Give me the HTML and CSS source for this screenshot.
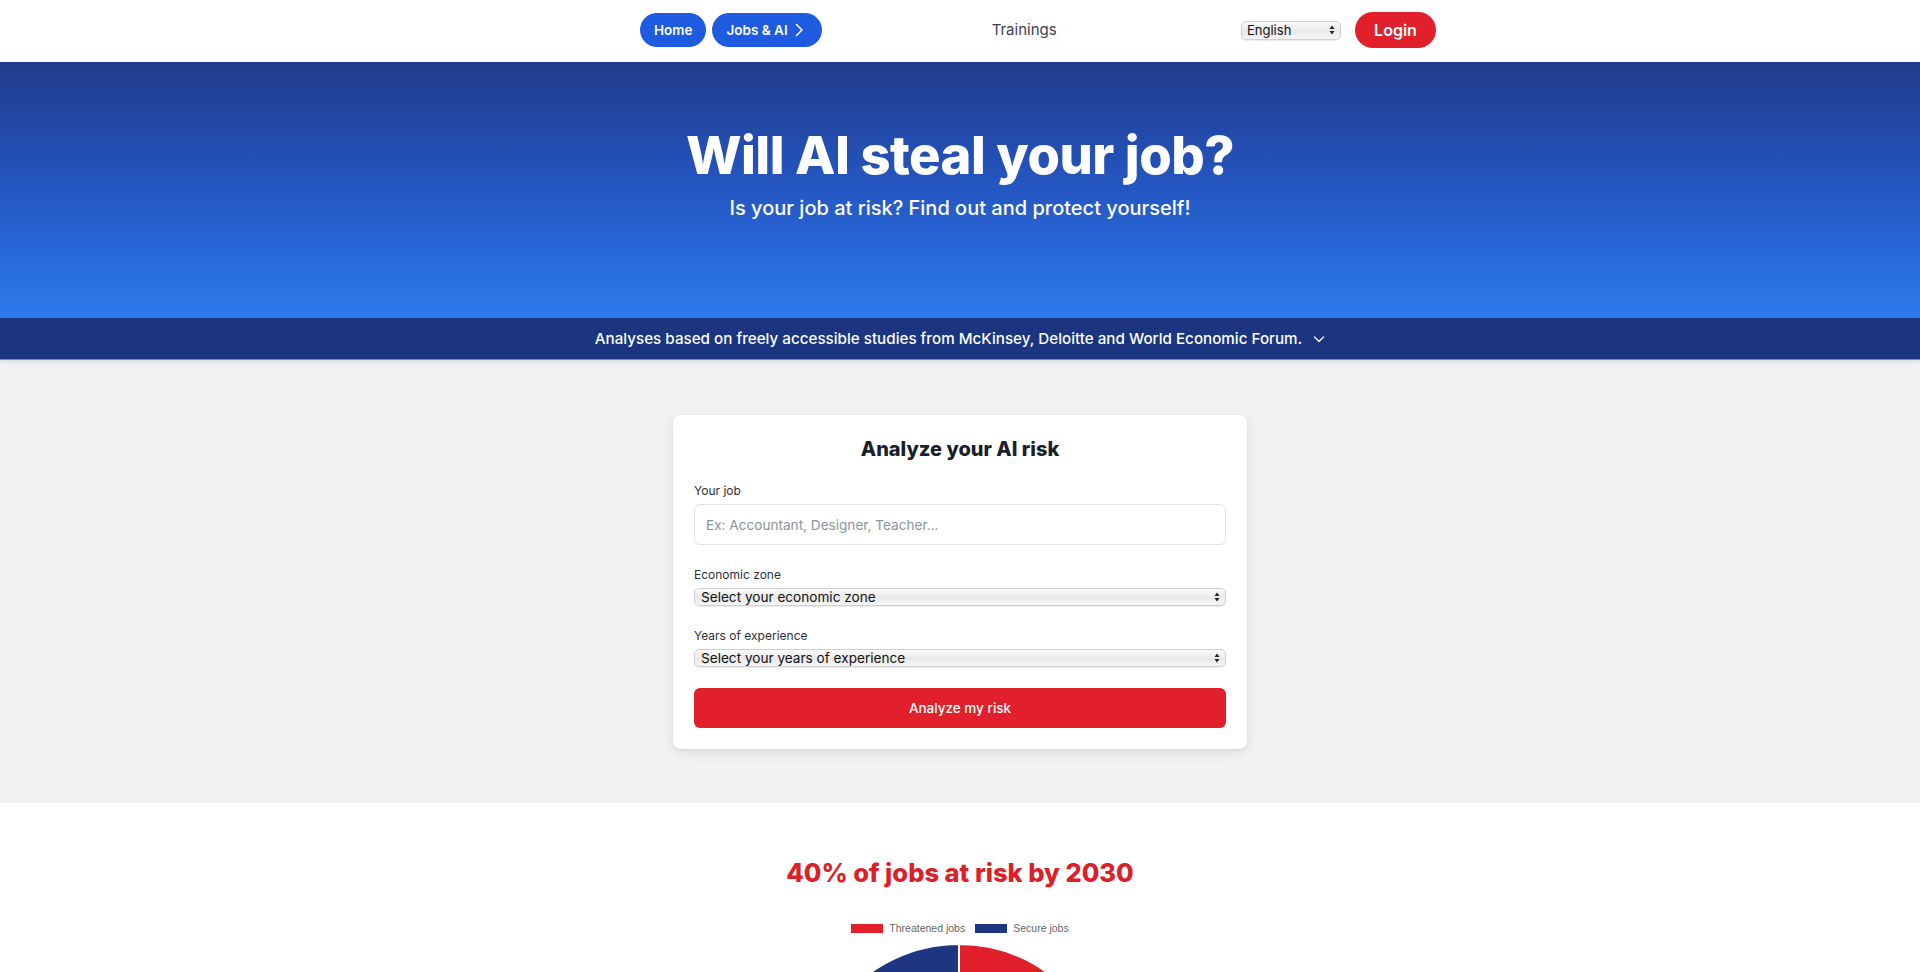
FILE: index.html
```html
<!DOCTYPE html>
<html lang="en">
<head>
<meta charset="utf-8">
<title>Will AI steal your job?</title>
<link rel="stylesheet" href="styles.css">
</head>
<body>
<header class="nav">
  <div class="nav-inner">
    <div class="nav-left">
      <a class="pill" href="#">Home</a>
      <a class="pill pill-icon" href="#">Jobs &amp; AI
        <svg width="16" height="16" viewBox="0 0 16 16"><path d="M5.5 2.5 L11 8 L5.5 13.5" fill="none" stroke="#fff" stroke-width="1.5" stroke-linecap="round" stroke-linejoin="round"/></svg>
      </a>
    </div>
    <a class="nav-link" href="#">Trainings</a>
    <div class="nav-right">
      <div class="lang-wrap">
        <select class="lang"><option>English</option><option>Français</option></select>
        <svg class="updown" width="6" height="10" viewBox="0 0 6 10"><path d="M3 0.5 L5.5 4 L0.5 4 Z M3 9.5 L5.5 6 L0.5 6 Z" fill="#222"/></svg>
      </div>
      <a class="login" href="#">Login</a>
    </div>
  </div>
</header>

<section class="hero">
  <h1 class="hero-title">Will AI steal your job?</h1>
  <p class="hero-sub">Is your job at risk? Find out and protect yourself!</p>
</section>

<div class="sources">
  <span>Analyses based on freely accessible studies from McKinsey, Deloitte and World Economic Forum.</span>
  <svg width="12" height="12" viewBox="0 0 12 12"><path d="M1.5 4 L6 8.5 L10.5 4" fill="none" stroke="#fff" stroke-width="1.3" stroke-linecap="round" stroke-linejoin="round"/></svg>
</div>

<main class="analyze">
  <form class="card">
    <h2 class="card-title">Analyze your AI risk</h2>
    <div class="field">
      <label class="label">Your job</label>
      <input class="input" type="text" placeholder="Ex: Accountant, Designer, Teacher...">
    </div>
    <div class="field">
      <label class="label">Economic zone</label>
      <div class="sel-wrap">
        <select class="sel"><option>Select your economic zone</option></select>
        <svg class="updown" width="6" height="10" viewBox="0 0 6 10"><path d="M3 0.5 L5.5 4 L0.5 4 Z M3 9.5 L5.5 6 L0.5 6 Z" fill="#222"/></svg>
      </div>
    </div>
    <div class="field">
      <label class="label">Years of experience</label>
      <div class="sel-wrap">
        <select class="sel"><option>Select your years of experience</option></select>
        <svg class="updown" width="6" height="10" viewBox="0 0 6 10"><path d="M3 0.5 L5.5 4 L0.5 4 Z M3 9.5 L5.5 6 L0.5 6 Z" fill="#222"/></svg>
      </div>
    </div>
    <button class="submit" type="button">Analyze my risk</button>
  </form>
</main>

<section class="stats">
  <h2 class="stats-title">40% of jobs at risk by 2030</h2>
  <div class="legend">
    <span class="legend-item"><i class="swatch swatch-red"></i>Threatened jobs</span>
    <span class="legend-item"><i class="swatch swatch-blue"></i>Secure jobs</span>
  </div>
  <svg class="pie" width="304" height="304" viewBox="0 0 304 304">
    <path d="M152 152 L152 1 A151 151 0 0 1 240.76 274.16 Z" fill="#e1202b" stroke="#fff" stroke-width="2"/>
    <path d="M152 152 L240.76 274.16 A151 151 0 1 1 152 1 Z" fill="#1e3580" stroke="#fff" stroke-width="2"/>
  </svg>
</section>
</body>
</html>
```

FILE: styles.css
```css
* { box-sizing: border-box; }
html, body { margin: 0; padding: 0; }
body {
  font-family: Inter, "Noto Sans", "Liberation Sans", sans-serif;
  color: #111827;
  background: #fff;
}
a { text-decoration: none; }

/* NAV */
.nav {
  height: 62px;
  padding-bottom: 2px;
  background: #fff;
  display: flex;
  align-items: center;
}
.nav-inner {
  width: 796px;
  margin-left: calc(50% - 320px);
  display: flex;
  align-items: center;
}
.nav-left { display: flex; gap: 6px; align-items: center; }
.pill {
  height: 34px;
  display: inline-flex;
  align-items: center;
  padding: 0 14px;
  border-radius: 17px;
  background: #1e5be0;
  color: #fff;
  font-size: 13.5px;
  font-weight: 600;
}
.pill-icon { padding: 0 15px 0 14px; gap: 3px; }
.nav-link {
  margin-left: 170px;
  font-size: 15px;
  color: #3b4150;
  margin-top: -2px;
}
.nav-right {
  margin-left: auto;
  display: flex;
  align-items: center;
  gap: 14px;
}
.lang-wrap, .sel-wrap { position: relative; }
.lang, .sel {
  display: block;
  appearance: none;
  -webkit-appearance: none;
  font-family: Inter, "Noto Sans", sans-serif;
  color: #111;
  border: 1px solid #cfcfcf;
  border-radius: 5px;
  background: linear-gradient(to bottom, #fafafa 0%, #e9e9e9 55%, #f6f6f6 100%);
  box-shadow: 0 1px 1px rgba(0,0,0,0.08);
  outline: none;
}
.lang {
  width: 100px;
  height: 19px;
  font-size: 13px;
  padding: 0 0 0 5px;
  line-height: 17px;
}
.updown {
  position: absolute;
  right: 6px;
  top: 50%;
  margin-top: -5px;
  pointer-events: none;
}
.login {
  height: 36px;
  width: 81px;
  display: inline-flex;
  align-items: center;
  justify-content: center;
  border-radius: 18px;
  background: #e1202b;
  color: #fff;
  font-size: 16px;
  font-weight: 600;
}

/* HERO */
.hero {
  height: 256px;
  background: linear-gradient(to bottom, #1f3b8a 0%, #2557c4 50%, #2d7aec 100%);
  text-align: center;
  color: #fff;
  padding-top: 66px;
}
.hero-title {
  margin: 0;
  font-size: 52.5px;
  line-height: 54px;
  font-weight: 800;
  letter-spacing: -0.5px;
}
.hero-sub {
  margin: 12px 0 0;
  font-size: 20px;
  line-height: 28px;
  font-weight: 500;
}

/* SOURCES BANNER */
.sources {
  height: 42px;
  background: #1b3580;
  color: #fff;
  display: flex;
  align-items: center;
  justify-content: center;
  gap: 11px;
  font-size: 15.2px;
  font-weight: 500;
  border-bottom: 1px solid #5b8fe4;
  box-shadow: 0 2px 4px rgba(0,0,0,0.10);
  position: relative;
}

/* ANALYZE */
.analyze {
  background: #f1f2f4;
  padding: 55px 0 54px;
  display: flex;
  justify-content: center;
}
.card {
  width: 574px;
  background: #fff;
  border-radius: 8px;
  box-shadow: 0 4px 14px rgba(0,0,0,0.09), 0 1px 3px rgba(0,0,0,0.05);
  padding: 21px 21px 21px;
  display: flex;
  flex-direction: column;
}
.card-title {
  margin: 0 0 19px;
  text-align: center;
  font-size: 20px;
  line-height: 26px;
  font-weight: 800;
  color: #1a1f2b;
}
.field { display: flex; flex-direction: column; margin-bottom: 20px; }
.label {
  font-size: 12px;
  line-height: 20px;
  color: #2b303b;
  margin-bottom: 3px;
}
.input {
  height: 41px;
  border: 1px solid #e1e3e7;
  border-radius: 6px;
  padding: 0 11px;
  font-family: Inter, "Noto Sans", sans-serif;
  font-size: 13.6px;
  color: #111;
  outline: none;
}
.input::placeholder { color: #8d939d; }
.sel {
  width: 100%;
  height: 18px;
  font-size: 13.6px;
  line-height: 16px;
  padding: 0 0 0 6px;
}
.submit {
  height: 40px;
  margin-top: 1px;
  border: none;
  border-radius: 6px;
  background: #e1202b;
  color: #fff;
  font-family: Inter, "Noto Sans", sans-serif;
  font-size: 13.5px;
  font-weight: 500;
  cursor: pointer;
}

/* STATS */
.stats {
  background: #fff;
  padding-top: 54px;
  display: flex;
  flex-direction: column;
  align-items: center;
}
.stats-title {
  margin: 0;
  font-size: 25.5px;
  line-height: 32px;
  font-weight: 800;
  color: #dc1f28;
}
.legend {
  margin-top: 33px;
  display: flex;
  gap: 10px;
  font-family: "Liberation Sans", Arial, sans-serif;
  font-size: 10.5px;
  line-height: 12px;
  color: #666;
}
.legend-item { display: inline-flex; align-items: center; gap: 6px; }
.swatch { display: inline-block; width: 32px; height: 9px; }
.swatch-red { background: #e1202b; }
.swatch-blue { background: #1e3580; }
.pie { margin-top: 9px; margin-left: -2px; }
```
